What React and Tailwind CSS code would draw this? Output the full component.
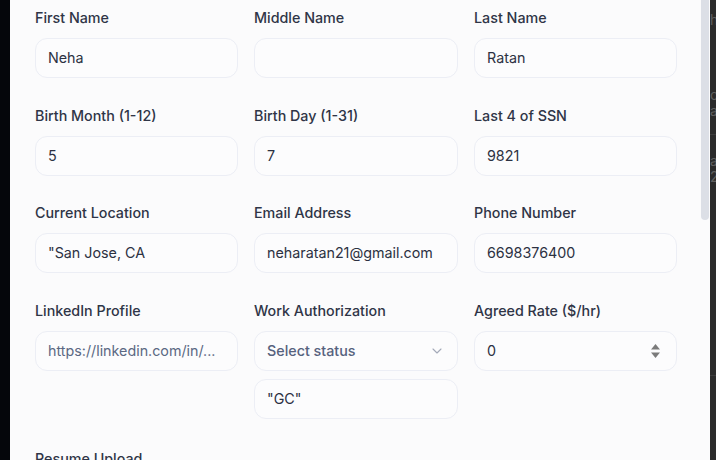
import React from 'react'

const font = { fontFamily: 'Inter, "Noto Sans", "Liberation Sans", sans-serif' }

function Field({ label, children }) {
  return (
    <div className="flex flex-col">
      <label className="h-5 leading-5 text-[14.3px] font-medium text-[#2f3547] mb-[10px] whitespace-nowrap">{label}</label>
      {children}
    </div>
  )
}

function Box({ value, placeholder, right, strong }) {
  const tone = value != null ? 'text-[#2c3142]' : strong ? 'text-[#56627d] font-medium' : 'text-[#5b6883]'
  return (
    <div className="h-10 rounded-xl border border-[#eceef5] bg-[#fcfcfd] flex items-center pl-[12px] pr-[14px] text-[14.3px]">
      <span className={`flex-1 truncate ${tone}`}>{value != null ? value : placeholder}</span>
      {right}
    </div>
  )
}

const Chevron = () => (
  <svg width="16" height="16" viewBox="0 0 24 24" fill="none" stroke="#a3a9b8" strokeWidth="1.6" strokeLinecap="round" strokeLinejoin="round" className="-mr-[2px]">
    <path d="m6 9 6 6 6-6" />
  </svg>
)

const Spinner = () => (
  <svg width="11" height="16" viewBox="0 0 11 16" className="mr-[1px]">
    <path d="M5.5 1 L10 6.5 L1 6.5 Z" fill="#7b7b7b" />
    <path d="M5.5 15 L10 9.5 L1 9.5 Z" fill="#7b7b7b" />
  </svg>
)

export default function App() {
  return (
    <div className="w-[716px] h-[460px] flex overflow-hidden" style={font}>
      <div className="w-[10px] shrink-0 bg-[#05060b]" />

      {/* dialog body */}
      <div className="relative w-[700px] shrink-0 bg-[#fbfbfc] overflow-hidden pl-[25px] pt-2">
        <div className="grid grid-cols-[203px_204px_203px] gap-x-4 gap-y-[27.5px]">
          <Field label="First Name"><Box value="Neha" /></Field>
          <Field label="Middle Name"><Box /></Field>
          <Field label="Last Name"><Box value="Ratan" /></Field>

          <Field label="Birth Month (1-12)"><Box value="5" /></Field>
          <Field label="Birth Day (1-31)"><Box value="7" /></Field>
          <Field label="Last 4 of SSN"><Box value="9821" /></Field>

          <Field label="Current Location"><Box value={'"San Jose, CA'} /></Field>
          <Field label="Email Address"><Box value="neharatan21@gmail.com" /></Field>
          <Field label="Phone Number"><Box value="6698376400" /></Field>

          <Field label="LinkedIn Profile"><Box placeholder="https://linkedin.com/in/..." /></Field>
          <Field label="Work Authorization">
            <div className="flex flex-col gap-2">
              <Box placeholder="Select status" strong right={<Chevron />} />
              <Box value={'"GC"'} />
            </div>
          </Field>
          <Field label="Agreed Rate ($/hr)"><Box value="0" right={<Spinner />} /></Field>

          <div className="col-span-3">
            <label className="h-5 leading-5 text-[14.3px] font-medium text-[#2f3547]">Resume Upload</label>
          </div>
        </div>

        {/* scrollbar thumb */}
        <div className="absolute top-0 right-[1px] w-2 h-[220px] rounded-b-full bg-[#dcdfe6]" />
      </div>

      {/* page behind the dialog */}
      <div className="flex-1 bg-[#2b2b2b] overflow-hidden text-[14px] text-[#5f5f5f] leading-4 whitespace-nowrap">
        <div className="pt-3">hi</div>
        <div className="mt-[59px]">on</div>
        <div>at</div>
        <div className="mt-[15px] border-t border-[#3d3d3d]" />
        <div className="mt-[18px]">av</div>
        <div>20</div>
        <div className="mt-[190px] border-t border-[#3d3d3d]" />
      </div>
    </div>
  )
}
